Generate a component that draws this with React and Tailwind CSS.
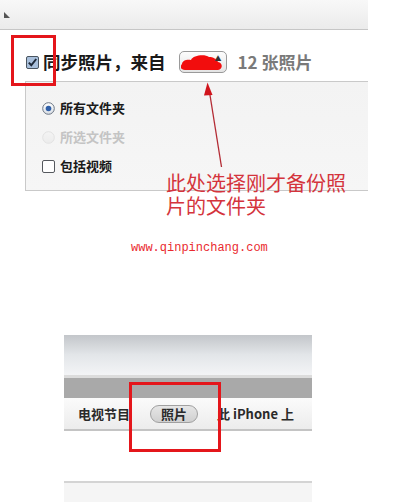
import React from 'react';

const cjk = { fontFamily: '"Noto Sans CJK SC", "Noto Sans", sans-serif' };

const CheckedBox = () => (
  <svg width="13" height="13" viewBox="0 0 13 13" className="shrink-0">
    <rect x="0.5" y="0.5" width="12" height="12" rx="1.5" fill="#a9c0dc" stroke="#4a5560" />
    <path d="M2.8 6.6 L5.3 9.3 L10.2 3" fill="none" stroke="#1f2a3a" strokeWidth="2" />
  </svg>
);

const Radio = ({ on }) => (
  <svg width="13" height="13" viewBox="0 0 13 13" className="shrink-0">
    <defs>
      <linearGradient id={on ? 'rOn' : 'rOff'} x1="0" y1="0" x2="0" y2="1">
        <stop offset="0" stopColor={on ? '#ffffff' : '#f4f4f4'} />
        <stop offset="1" stopColor={on ? '#d7dde4' : '#ececec'} />
      </linearGradient>
    </defs>
    <circle cx="6.5" cy="6.5" r="5.8" fill={`url(#${on ? 'rOn' : 'rOff'})`} stroke={on ? '#6b7684' : '#e2e2e2'} />
    {on && <circle cx="6.5" cy="6.5" r="2.8" fill="#2f5fa8" />}
  </svg>
);

const EmptyBox = () => (
  <svg width="13" height="13" viewBox="0 0 13 13" className="shrink-0">
    <rect x="0.5" y="0.5" width="12" height="12" rx="1.5" fill="#ffffff" stroke="#55595e" />
  </svg>
);

export default function App() {
  return (
    <div className="relative w-[400px] h-[502px] bg-white overflow-hidden" style={cjk}>
      {/* top toolbar strip */}
      <div className="w-[368px] h-[30px] bg-gradient-to-b from-[#f8f8f8] to-[#ebebeb] border-b border-[#c6c6c6] flex items-center pl-[4px]">
        <svg width="6" height="8" viewBox="0 0 6 8">
          <path d="M0 1 L0 7 L6 7 Z" fill="#555" />
        </svg>
      </div>

      {/* sync title row */}
      <div className="h-[51px] pt-[21px] pl-[26px] flex items-start">
        <div className="h-[22px] flex items-center">
          <CheckedBox />
          <span className="ml-[4px] text-[17.5px] font-bold text-[#1a1a1a] leading-[22px]">同步照片，来自</span>
          <div className="ml-[13px] w-[48px] h-[22px] rounded-[5px] border border-[#9a9a9a] bg-gradient-to-b from-[#fdfdfd] to-[#e4e4e4] flex items-center pl-[1px] relative">
            <svg width="42" height="17" viewBox="0 0 42 17">
              <path d="M1 10 C1 6 7 5 10 6 C12 1 24 0 28 3 C32 3 36 5 37 8 C42 9 42 15 37 16 L4 16 C-1 16 -1 12 1 10 Z" fill="#f20d0d" />
            </svg>
            <span className="absolute right-[4px] top-[3px] text-[7px] leading-none text-[#333]">▲</span>
          </div>
          <span className="ml-[11px] text-[17px] font-bold text-[#7a7a7a] leading-[22px]">12 张照片</span>
        </div>
      </div>

      {/* options panel */}
      <div className="ml-[25px] w-[343px] h-[110px] bg-gradient-to-b from-[#f3f3f3] to-[#f6f6f6] border-l border-t border-b border-[#c9c9c9] pl-[16px] pt-[19px] flex flex-col gap-[15px]">
        <div className="flex items-center gap-[5px] h-[14px]">
          <Radio on />
          <span className="text-[13px] font-bold text-[#1a1a1a]">所有文件夹</span>
        </div>
        <div className="flex items-center gap-[5px] h-[14px]">
          <Radio />
          <span className="text-[13px] font-bold text-[#c4c4c4]">所选文件夹</span>
        </div>
        <div className="flex items-center gap-[5px] h-[14px]">
          <EmptyBox />
          <span className="text-[13px] font-bold text-[#1a1a1a]">包括视频</span>
        </div>
      </div>

      {/* watermark url */}
      <div className="mt-[49px] h-[16px] pl-[131px] text-[12px] leading-[16px] text-[#ea2a2f]" style={{ fontFamily: '"Liberation Mono", monospace' }}>
        www.qinpinchang.com
      </div>

      {/* itunes tab bar */}
      <div className="mt-[79px] ml-[64px] w-[248px]">
        <div className="h-[40px] bg-gradient-to-b from-[#c3c6ca] via-[#e3e6e9] to-[#f3f4f6]" />
        <div className="h-[3px] bg-[#dcdcdc]" />
        <div className="h-[20px] bg-[#a9a9a9]" />
        <div className="h-[33px] bg-gradient-to-b from-[#fbfbfb] to-[#ececec] border-b-2 border-[#c4c4c4] flex items-center pl-[14px]">
          <span className="text-[13px] font-bold text-[#2a2a2a]">电视节目</span>
          <span className="ml-[20px] w-[48px] h-[18px] rounded-full border border-[#a0a0a0] bg-gradient-to-b from-[#e6e6e6] to-[#d0d0d0] flex items-center justify-center text-[13px] font-bold text-[#2a2a2a] leading-none">照片</span>
          <span className="ml-[19px] text-[13px] font-bold text-[#2a2a2a]">此 iPhone 上</span>
        </div>
        <div className="h-[50px] bg-white" />
        <div className="h-[2px] bg-[#d4d4d4]" />
        <div className="h-[20px] bg-[#f5f5f5]" />
      </div>

      {/* annotations */}
      <div className="absolute left-[11px] top-[35px] w-[45px] h-[51px] border-[3px] border-[#e4161b]" />
      <div className="absolute left-[129px] top-[382px] w-[92px] h-[70px] border-[3px] border-[#e4161b]" />
      <svg className="absolute left-0 top-0" width="400" height="502" viewBox="0 0 400 502">
        <line x1="209.5" y1="92" x2="221.5" y2="167" stroke="#b32a33" strokeWidth="1.3" />
        <path d="M207.5 82.5 L212.5 95 L204 95.5 Z" fill="#d0141c" />
      </svg>
      <div className="absolute left-[166px] top-[171px] text-[20px] leading-[23px] text-[#d4343c]">
        <div>此处选择刚才备份照</div>
        <div>片的文件夹</div>
      </div>
    </div>
  );
}
